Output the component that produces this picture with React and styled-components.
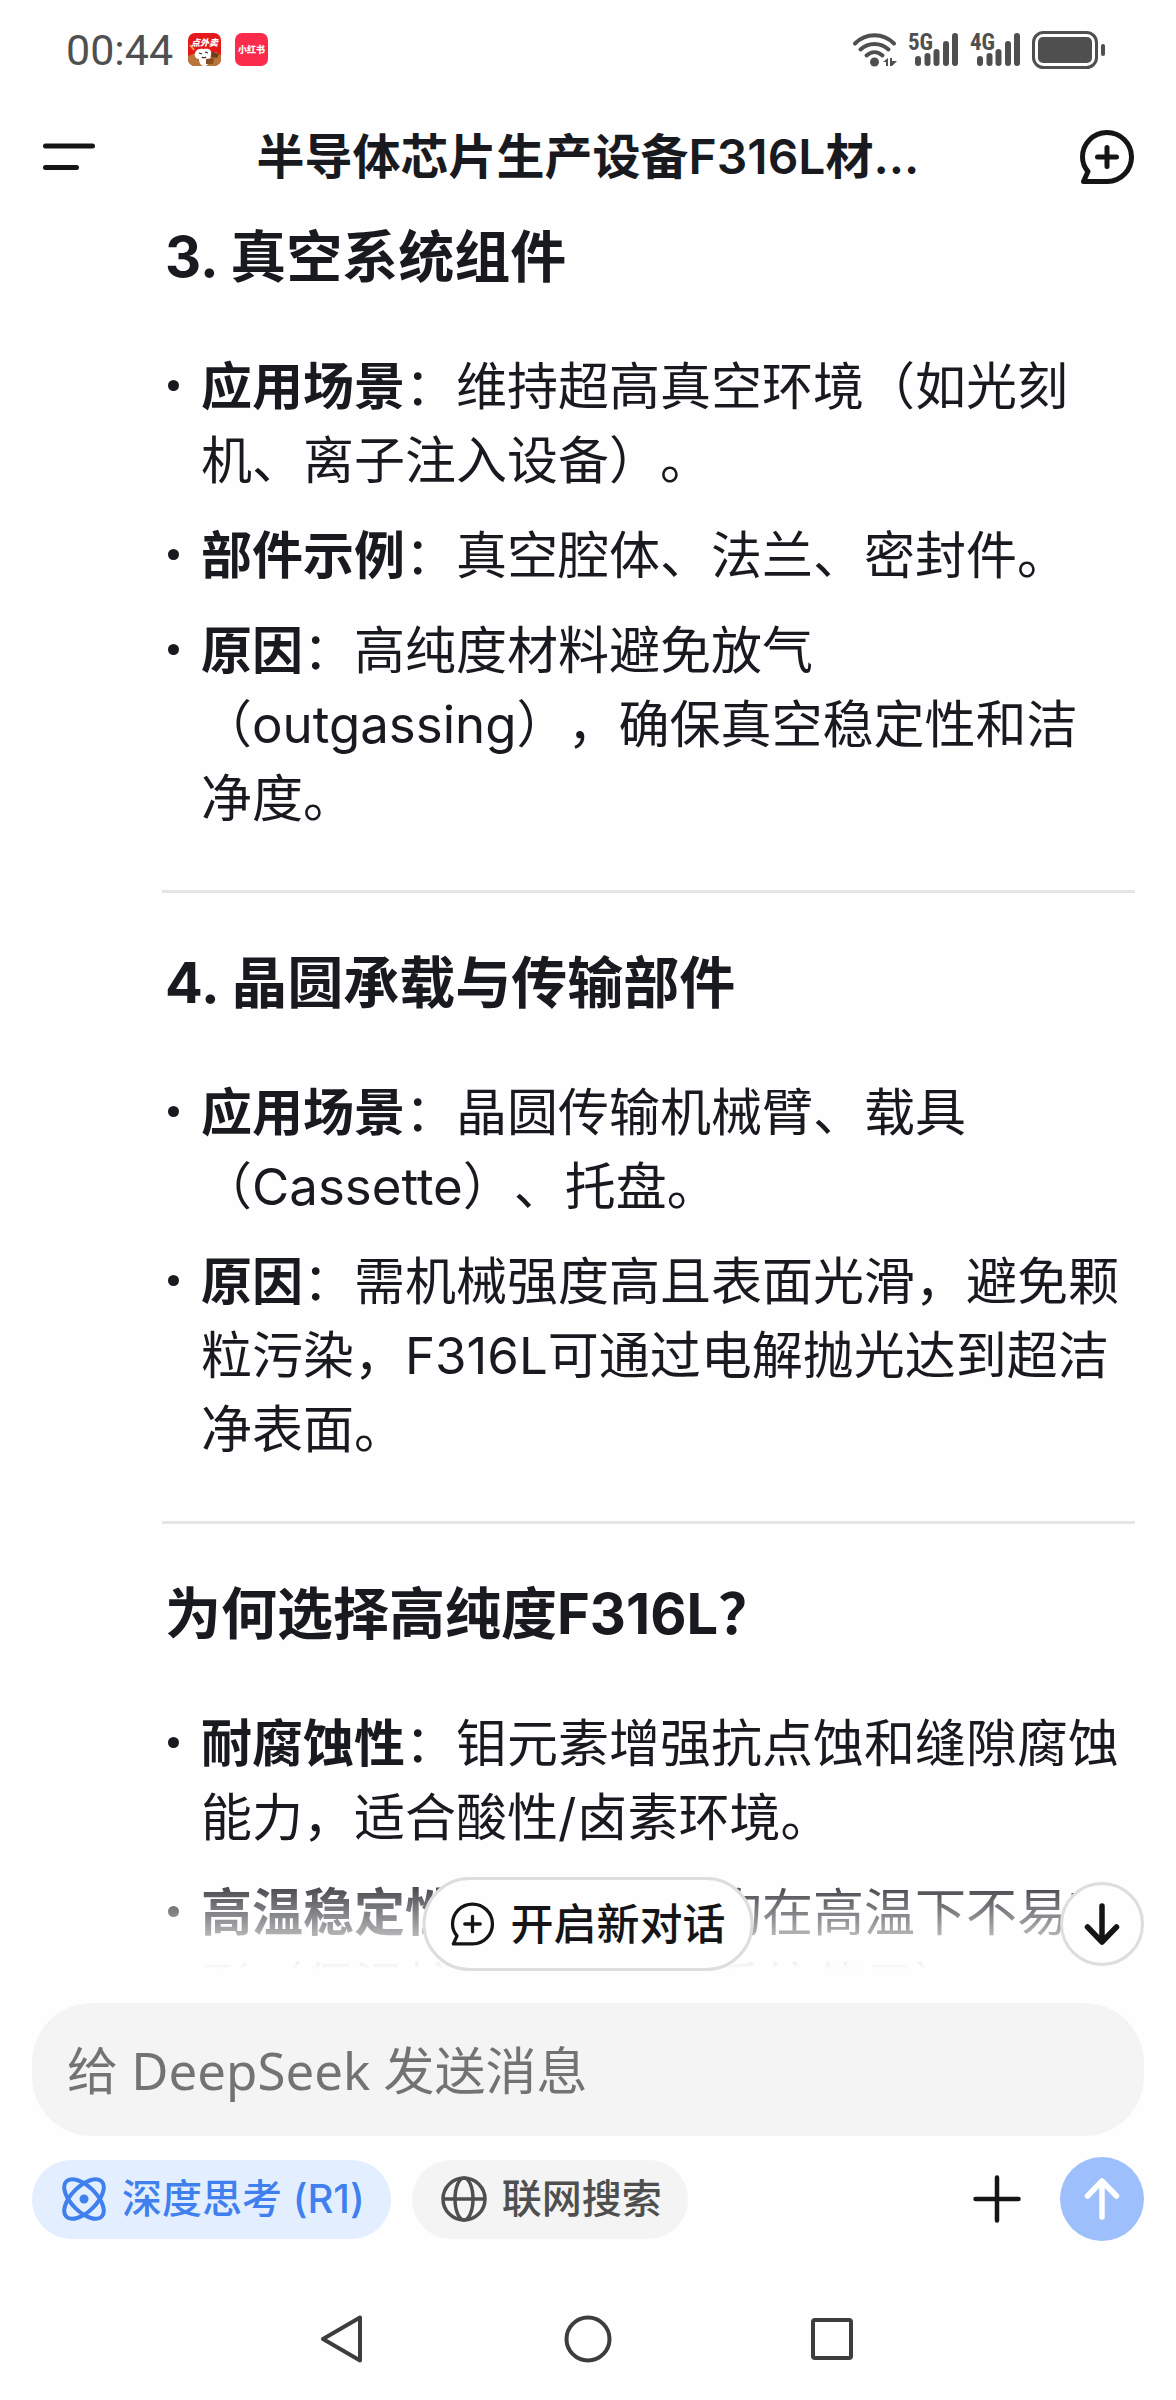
import React from 'react';
import styled, { createGlobalStyle, css } from 'styled-components';

const GlobalStyle = createGlobalStyle`
  *,
  *::before,
  *::after {
    box-sizing: border-box;
  }

  body {
    margin: 0;
    background: #fefefe;
    color: #181a20;
    font-family: Inter, 'Noto Sans CJK SC', sans-serif;
    text-spacing-trim: space-all;
  }
`;

const Screen = styled.div`
  display: flex;
  flex-direction: column;
  height: 100vh;
  background: #fefefe;
`;

/* ---------- status bar ---------- */

const StatusBar = styled.div`
  display: flex;
  align-items: center;
  flex: none;
  height: 99px;
  padding: 0 70px 0 66px;
  color: #4f4f4f;
`;

const Clock = styled.time`
  margin-right: 15px;
  font-family: Roboto, sans-serif;
  font-size: 43px;
  line-height: 52px;
`;

const StatusIcons = styled.div`
  display: flex;
  align-items: center;
  gap: ${(props) => props.$gap}px;
  margin-left: ${(props) => (props.$end ? 'auto' : '0')};

  svg {
    display: block;
    overflow: visible;
  }
`;

/* ---------- header ---------- */

const Header = styled.header`
  display: flex;
  align-items: center;
  justify-content: space-between;
  flex: none;
  height: 116px;
  padding: 0 40px;
`;

const IconButton = styled.button`
  display: flex;
  align-items: center;
  justify-content: center;
  flex: none;
  width: 58px;
  height: 58px;
  padding: 0;
  border: 0;
  background: none;
  color: #151517;
  cursor: pointer;
`;

const Title = styled.h1`
  margin: 0;
  font-size: 48px;
  font-weight: 600;
  line-height: 60px;
  white-space: nowrap;
`;

/* ---------- conversation ---------- */

const ChatArea = styled.main`
  position: relative;
  flex: 1;
  min-height: 0;
`;

const Message = styled.article`
  height: 100%;
  padding: 0 41px 0 162px;
  overflow-y: auto;
  scrollbar-width: none;
`;

const SectionTitle = styled.h3`
  margin: 0 0 51px;
  padding-left: 3px;
  font-size: 56px;
  font-weight: 700;
  line-height: 84px;
`;

const Points = styled.ul`
  display: flex;
  flex-direction: column;
  gap: 21px;
  margin: 0;
  padding: 0;
  list-style: none;
`;

const Point = styled.li`
  display: flex;
  font-size: 51px;
  line-height: 74px;

  &::before {
    content: '';
    flex: none;
    width: 11px;
    height: 11px;
    margin: 30px 22px 0 6px;
    border-radius: 50%;
    background: currentColor;
  }
`;

const NoBreak = styled.span`
  white-space: nowrap;
`;

const Divider = styled.hr`
  height: 3px;
  margin: 54px 0 48px;
  border: 0;
  background: #e5e5e5;
`;

const Fade = styled.div`
  position: absolute;
  right: 0;
  bottom: 0;
  left: 0;
  height: 104px;
  background: linear-gradient(rgba(254, 254, 254, 0), #fefefe);
  pointer-events: none;
`;

const floating = css`
  position: absolute;
  display: flex;
  align-items: center;
  justify-content: center;
  border: 3px solid #dddddd;
  background: #fefefe;
  color: #151517;
  cursor: pointer;
`;

const NewChatButton = styled.button`
  ${floating}
  bottom: -2px;
  left: 50%;
  gap: 16px;
  height: 94px;
  padding: 0 25px 0 25px;
  border-radius: 47px;
  font-family: inherit;
  font-size: 43px;
  font-weight: 500;
  line-height: 60px;
  white-space: nowrap;
  transform: translateX(-50%);
`;

const ScrollDownButton = styled.button`
  ${floating}
  right: 32px;
  bottom: 3px;
  width: 84px;
  height: 84px;
  padding: 0;
  border-radius: 50%;
`;

/* ---------- composer ---------- */

const Composer = styled.form`
  display: flex;
  flex-direction: column;
  flex: none;
  gap: 21px;
  padding: 34px 32px 0;
`;

const MessageInput = styled.input`
  width: 100%;
  height: 133px;
  padding: 0 35px;
  border: 0;
  border-radius: 60px;
  outline: 0;
  background: #f4f4f4;
  color: #181a20;
  font-family: 'Noto Sans', 'Noto Sans CJK SC', sans-serif;
  font-size: 51px;

  &::placeholder {
    color: #737373;
    opacity: 1;
  }
`;

const Toolbar = styled.div`
  display: flex;
  align-items: center;
  gap: 21px;
`;

const Chip = styled.button`
  display: flex;
  align-items: center;
  gap: 15px;
  height: 79px;
  padding: 0 26px 0 29px;
  border: 0;
  border-radius: 40px;
  background: ${(props) => (props.$active ? '#e3efff' : '#f4f4f4')};
  color: ${(props) => (props.$active ? '#4080ee' : '#4f4f4f')};
  font-family: inherit;
  font-size: 40px;
  font-weight: 500;
  line-height: 56px;
  white-space: nowrap;
  cursor: pointer;
`;

const Actions = styled.div`
  display: flex;
  align-items: center;
  gap: 34px;
  margin-left: auto;
`;

const SendButton = styled.button`
  display: flex;
  align-items: center;
  justify-content: center;
  width: 84px;
  height: 84px;
  padding: 0;
  border: 0;
  border-radius: 50%;
  background: #9dbffb;
  color: #ffffff;
  cursor: pointer;
`;

/* ---------- system navigation ---------- */

const SystemNav = styled.nav`
  display: flex;
  align-items: center;
  justify-content: center;
  flex: none;
  gap: 187px;
  height: 122px;
  margin-top: 37px;
  color: #3d3d3d;

  button {
    color: inherit;
  }
`;

/* ---------- icons ---------- */

const DeliveryAppIcon = () => (
  <svg width="33" height="33" viewBox="0 0 33 33" aria-hidden="true">
    <clipPath id="delivery-clip">
      <rect width="33" height="33" rx="7" />
    </clipPath>
    <g clipPath="url(#delivery-clip)">
      <rect width="33" height="33" fill="#e3191c" />
      <path d="M0 33V23l8-3 6 4 14-5 5 3v11z" fill="#b8763a" />
      <path d="M2 12l4 5" stroke="#f0a050" strokeWidth="2" />
      <path d="M7 20c1-4 5-5 9-4 5-1 8 1 7 5l-1 6c-1 4-3 6-6 6s-5-3-5-7c-3 0-5-3-4-6z" fill="#fff" />
      <path d="M11 20l3 1M17 19l3 1M14 24c1 1 3 1 4 0" stroke="#322" strokeWidth="1.2" fill="none" />
      <path d="M24 19l7 2-2 4-6-1z" fill="#6f3d1c" />
      <path d="M18 26l8-1-1 6h-7z" fill="#8b4d1f" />
      <text x="16.500" y="13" textAnchor="middle" fontSize="9" fontWeight="900" fontStyle="italic" fill="#fff">
        点外卖
      </text>
    </g>
  </svg>
);

const RedNoteIcon = () => (
  <svg width="33" height="33" viewBox="0 0 33 33" aria-hidden="true">
    <rect width="33" height="33" rx="7" fill="#fb2b4b" />
    <text x="16.500" y="20" textAnchor="middle" fontSize="9" fontWeight="900" fill="#fff">
      小红书
    </text>
  </svg>
);

const WifiIcon = () => (
  <svg width="46" height="36" viewBox="0 0 46 36" fill="none" stroke="currentColor" strokeWidth="4" strokeLinecap="round" aria-hidden="true">
    <path d="M3 11.500C14 .500 31 .500 42 11.500" />
    <path d="M8.500 17.500c8-7.500 20-7.500 28 0" />
    <path d="M14.500 23.500c5-4.500 11-4.500 16 0" />
    <circle cx="22.500" cy="30" r="4.500" fill="currentColor" stroke="none" />
    <path d="M31 30l5-4v8h-2v-4zM38 26h2v3h5l-5 5h-2z" fill="currentColor" stroke="none" />
  </svg>
);

const SignalIcon = ({ label }) => (
  <svg width="52" height="36" viewBox="0 0 52 36" aria-hidden="true">
    <text x="0" y="18" fontFamily="Roboto Condensed, Roboto, sans-serif" fontSize="23" fontWeight="700" fill="currentColor">
      {label}
    </text>
    <g stroke="currentColor" strokeWidth="6" strokeLinecap="round">
      <path d="M10 27v4M19.500 24v7M28.500 20v11M38 12v19M47 4v27" />
    </g>
  </svg>
);

const BatteryIcon = () => (
  <svg width="74" height="38" viewBox="0 0 74 38" aria-hidden="true">
    <rect x="1.500" y="1.500" width="63" height="35" rx="10" fill="none" stroke="currentColor" strokeWidth="3" />
    <rect x="6" y="6" width="54" height="26" rx="5" fill="currentColor" />
    <rect x="69" y="13" width="4" height="12" rx="2" fill="currentColor" />
  </svg>
);

const MenuIcon = () => (
  <svg width="52" height="28" viewBox="0 0 52 28" fill="none" stroke="currentColor" strokeWidth="5" strokeLinecap="round" aria-hidden="true">
    <path d="M2.500 3h47M2.500 24.500h31" />
  </svg>
);

const BubblePlusIcon = ({ size, stroke }) => (
  <svg width={size} height={size} viewBox="0 0 54 54" fill="none" stroke="currentColor" strokeWidth={stroke} strokeLinejoin="round" strokeLinecap="round" aria-hidden="true">
    <path d="M27.500 51.500H3.500l4.500-10c-3.500-4-5.500-9-5.500-14.500a24.500 24.500 0 1 1 25 24.500z" />
    <path d="M27 17.500v19M17.500 27h19" />
  </svg>
);

const ArrowIcon = ({ up }) => (
  <svg width="40" height="46" viewBox="0 0 40 46" fill="none" stroke="currentColor" strokeWidth="5.500" strokeLinejoin="round" strokeLinecap="round" aria-hidden="true">
    {up ? <path d="M20 41V5M5.500 20L20 5l14.500 15" /> : <path d="M20 5v36M5.500 26L20 41l14.500-15" />}
  </svg>
);

const AtomIcon = () => (
  <svg width="46" height="46" viewBox="0 0 46 46" fill="none" stroke="currentColor" strokeWidth="4" aria-hidden="true">
    <ellipse cx="23" cy="23" rx="25" ry="12.500" transform="rotate(45 23 23)" />
    <ellipse cx="23" cy="23" rx="25" ry="12.500" transform="rotate(-45 23 23)" />
    <circle cx="23" cy="23" r="4.500" fill="currentColor" stroke="none" />
  </svg>
);

const GlobeIcon = () => (
  <svg width="46" height="46" viewBox="0 0 46 46" fill="none" stroke="currentColor" strokeWidth="3.500" aria-hidden="true">
    <circle cx="23" cy="23" r="21" />
    <ellipse cx="23" cy="23" rx="9" ry="21" />
    <path d="M2 23h42" />
  </svg>
);

const PlusIcon = () => (
  <svg width="48" height="48" viewBox="0 0 48 48" stroke="currentColor" strokeWidth="4.500" strokeLinecap="round" aria-hidden="true">
    <path d="M24 2.500v43M2.500 24h43" />
  </svg>
);

const NavIcon = ({ children }) => (
  <svg width="50" height="50" viewBox="0 0 50 50" fill="none" stroke="currentColor" strokeWidth="4" strokeLinejoin="round" aria-hidden="true">
    {children}
  </svg>
);

const App = () => {
  return (
    <>
      <GlobalStyle />
      <Screen>
        <StatusBar>
          <Clock>00:44</Clock>
          <StatusIcons $gap={14}>
            <DeliveryAppIcon />
            <RedNoteIcon />
          </StatusIcons>
          <StatusIcons $gap={10} $end>
            <WifiIcon />
            <SignalIcon label="5G" />
            <SignalIcon label="4G" />
            <BatteryIcon />
          </StatusIcons>
        </StatusBar>

        <Header>
          <IconButton type="button" aria-label="菜单">
            <MenuIcon />
          </IconButton>
          <Title>半导体芯片生产设备F316L材...</Title>
          <IconButton type="button" aria-label="新对话">
            <BubblePlusIcon size={54} stroke={5} />
          </IconButton>
        </Header>

        <ChatArea>
          <Message>
            <SectionTitle>3. 真空系统组件</SectionTitle>
            <Points>
              <Point>
                <span><strong>应用场景</strong>：维持超高真空环境（如光刻机、离子注入设备）。</span>
              </Point>
              <Point>
                <span><strong>部件示例</strong>：真空腔体、法兰、密封件。</span>
              </Point>
              <Point>
                <span><strong>原因</strong>：高纯度材料避免放气（outgassing），确保真空稳定性和洁<NoBreak>净度。</NoBreak></span>
              </Point>
            </Points>
            <Divider />

            <SectionTitle>4. 晶圆承载与传输部件</SectionTitle>
            <Points>
              <Point>
                <span><strong>应用场景</strong>：晶圆传输机械臂、载具（Cassette）、托盘。</span>
              </Point>
              <Point>
                <span><strong>原因</strong>：需机械强度高且表面光滑，避免颗粒污染，F316L可通过电解抛光达到超洁净表面。</span>
              </Point>
            </Points>
            <Divider />

            <SectionTitle>为何选择高纯度F316L？</SectionTitle>
            <Points>
              <Point>
                <span><strong>耐腐蚀性</strong>：钼元素增强抗点蚀和缝隙腐蚀能力，适合酸性/卤素环境。</span>
              </Point>
              <Point>
                <span><strong>高温稳定性</strong>：奥氏体结构在高温下不易变形（保温炉及加热腔室系统使用）。</span>
              </Point>
            </Points>
          </Message>
          <Fade />
          <NewChatButton type="button">
            <BubblePlusIcon size={44} stroke={4} />
            开启新对话
          </NewChatButton>
          <ScrollDownButton type="button" aria-label="滚动到底部">
            <ArrowIcon />
          </ScrollDownButton>
        </ChatArea>

        <Composer onSubmit={(e) => e.preventDefault()}>
          <MessageInput type="text" aria-label="消息" placeholder="给 DeepSeek 发送消息" />
          <Toolbar>
            <Chip type="button" $active aria-pressed="true">
              <AtomIcon />
              深度思考 (R1)
            </Chip>
            <Chip type="button" aria-pressed="false">
              <GlobeIcon />
              联网搜索
            </Chip>
            <Actions>
              <IconButton type="button" aria-label="添加附件">
                <PlusIcon />
              </IconButton>
              <SendButton type="submit" aria-label="发送">
                <ArrowIcon up />
              </SendButton>
            </Actions>
          </Toolbar>
        </Composer>

        <SystemNav aria-label="系统导航">
          <IconButton type="button" aria-label="返回">
            <NavIcon>
              <path d="M42 3.500v43L5 25z" />
            </NavIcon>
          </IconButton>
          <IconButton type="button" aria-label="主页">
            <NavIcon>
              <circle cx="25" cy="25" r="21.500" />
            </NavIcon>
          </IconButton>
          <IconButton type="button" aria-label="最近任务">
            <NavIcon>
              <rect x="5" y="6" width="38" height="38" rx="2" />
            </NavIcon>
          </IconButton>
        </SystemNav>
      </Screen>
    </>
  );
};

export default App;
